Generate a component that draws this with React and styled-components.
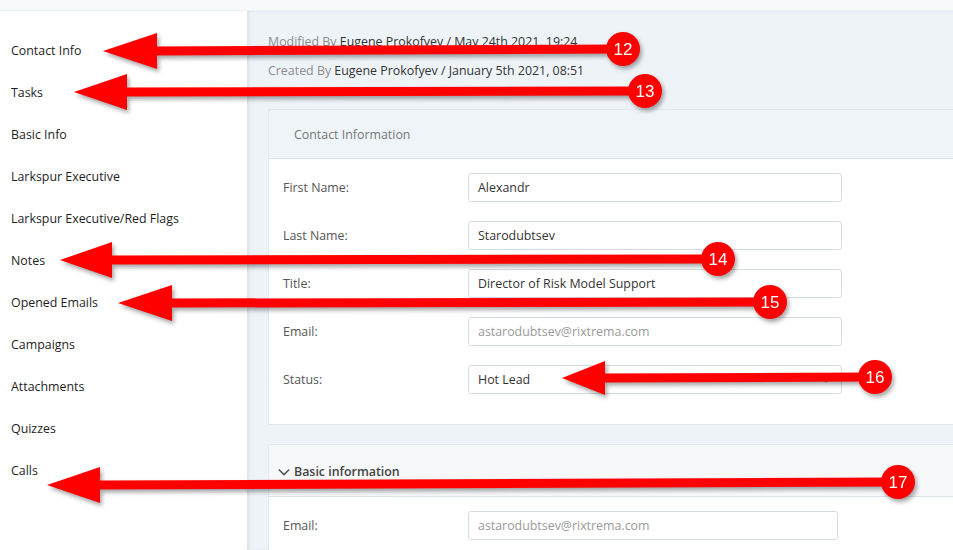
import React from 'react';
import styled, { createGlobalStyle } from 'styled-components';

const GlobalStyle = createGlobalStyle`
  html, body {
    margin: 0;
    padding: 0;
    background: #fff;
    font-family: "Open Sans", "Liberation Sans", sans-serif;
    font-size: 12.4px;
    overflow: hidden;
  }
  * { box-sizing: border-box; }
`;

const Page = styled.div`
  position: relative;
  width: 953px;
  height: 550px;
  display: flex;
  flex-direction: column;
  overflow: hidden;
`;

const TopBar = styled.div`
  height: 11px;
  flex-shrink: 0;
  background: #f8f9fb;
  border-bottom: 1px solid #eceff3;
`;

const Body = styled.div`
  flex: 1;
  display: flex;
  min-height: 0;
`;

const Sidebar = styled.nav`
  width: 247px;
  flex-shrink: 0;
  background: #fff;
  padding-top: 18px;
  display: flex;
  flex-direction: column;
`;

const NavItem = styled.div`
  height: 42px;
  display: flex;
  align-items: center;
  padding-left: 11px;
  color: #1e1e1e;
`;

const Main = styled.main`
  flex: 1;
  background: #eef3f8;
  box-shadow: inset 3px 0 4px -2px rgba(180, 195, 210, 0.5);
  padding: 16px 0 0 21px;
  display: flex;
  flex-direction: column;
  min-width: 0;
`;

const Meta = styled.div`
  display: flex;
  flex-direction: column;
  margin-bottom: 24px;
`;

const MetaLine = styled.div`
  line-height: 29px;
  color: #333;
  white-space: nowrap;
`;

const MetaMuted = styled.span`
  color: #8c8c8c;
`;

const Card = styled.section`
  background: #fff;
  border: 1px solid #e2e8ef;
  border-right: none;
  margin-bottom: 19px;
`;

const CardHeader = styled.div`
  height: ${p => p.$tall ? 52 : 49}px;
  display: flex;
  align-items: center;
  gap: 3px;
  padding-left: ${p => p.$collapsible ? 8 : 25}px;
  padding-top: ${p => p.$tall ? 2 : 0}px;
  background: ${p => p.$collapsible ? '#f6f8fa' : '#eff4f8'};
  border-bottom: 1px solid #dbe4ec;
  color: ${p => p.$collapsible ? '#444' : '#777'};
  font-weight: ${p => p.$collapsible ? 600 : 400};
`;

const CardBody = styled.div`
  display: flex;
  flex-direction: column;
  gap: 19px;
  padding: ${p => p.$pad || '14px 0 30px 14px'};
`;

const Row = styled.div`
  display: flex;
  align-items: center;
`;

const Label = styled.label`
  width: 185px;
  flex-shrink: 0;
  color: #555;
`;

const Field = styled.div`
  width: ${p => p.$width || 374}px;
  height: 29px;
  display: flex;
  align-items: center;
  justify-content: space-between;
  padding: 0 10px 0 9px;
  border: 1px solid #d6dbe1;
  border-radius: 3px;
  background: #fff;
  color: ${p => p.$disabled ? '#9a9a9a' : '#333'};
`;

const Overlay = styled.svg`
  position: absolute;
  left: 0;
  top: 0;
  pointer-events: none;
  filter: drop-shadow(2px 3px 2px rgba(0, 0, 0, 0.35));
`;

const Chevron = ({ size = 12, color = '#555', width = 1.4 }) => (
  <svg width={size} height={size} viewBox="0 0 12 12">
    <path d="M1.5 3.8 L6 8.2 L10.5 3.8" fill="none" stroke={color} strokeWidth={width} />
  </svg>
);

const navItems = [
  'Contact Info', 'Tasks', 'Basic Info', 'Larkspur Executive',
  'Larkspur Executive/Red Flags', 'Notes', 'Opened Emails', 'Campaigns',
  'Attachments', 'Quizzes', 'Calls',
];

const fields = [
  { label: 'First Name:', value: 'Alexandr' },
  { label: 'Last Name:', value: 'Starodubtsev' },
  { label: 'Title:', value: 'Director of Risk Model Support' },
  { label: 'Email:', value: 'astarodubtsev@rixtrema.com', disabled: true },
  { label: 'Status:', value: 'Hot Lead', select: true },
];

// tip x/y, head base x, half head height, badge x/y, number
const arrows = [
  { tx: 103, ty: 51, bx: 157, h: 18, cx: 623, cy: 49, n: 12 },
  { tx: 74, ty: 92, bx: 127, h: 18, cx: 645, cy: 91, n: 13 },
  { tx: 60, ty: 260, bx: 112, h: 18, cx: 718, cy: 259, n: 14 },
  { tx: 118, ty: 303, bx: 172, h: 18, cx: 770, cy: 302, n: 15 },
  { tx: 562, ty: 378, bx: 605, h: 17, cx: 875, cy: 377, n: 16 },
  { tx: 47, ty: 485, bx: 100, h: 18, cx: 898, cy: 482, n: 17 },
];

function Arrows() {
  return (
    <Overlay width="953" height="550">
      {arrows.map(a => (
        <g key={a.n}>
          <polygon points={`${a.tx},${a.ty} ${a.bx},${a.ty - a.h} ${a.bx},${a.ty + a.h}`} fill="#ff0000" />
          <polygon
            points={`${a.bx - 2},${a.ty - 4.5} ${a.cx},${a.cy - 4.5} ${a.cx},${a.cy + 4.5} ${a.bx - 2},${a.ty + 4.5}`}
            fill="#ff0000"
          />
          <circle cx={a.cx} cy={a.cy} r="17" fill="#ff0000" />
          <text
            x={a.cx}
            y={a.cy + 6}
            textAnchor="middle"
            fill="#fff"
            fontSize="17"
            fontFamily="'Liberation Sans', Arial, sans-serif"
          >
            {a.n}
          </text>
        </g>
      ))}
    </Overlay>
  );
}

export default function App() {
  return (
    <>
      <GlobalStyle />
      <Page>
        <TopBar />
        <Body>
          <Sidebar>
            {navItems.map(item => <NavItem key={item}>{item}</NavItem>)}
          </Sidebar>
          <Main>
            <Meta>
              <MetaLine><MetaMuted>Modified By</MetaMuted> Eugene Prokofyev / May 24th 2021, 19:24</MetaLine>
              <MetaLine><MetaMuted>Created By</MetaMuted> Eugene Prokofyev / January 5th 2021, 08:51</MetaLine>
            </Meta>
            <Card>
              <CardHeader>Contact Information</CardHeader>
              <CardBody>
                {fields.map(f => (
                  <Row key={f.label}>
                    <Label>{f.label}</Label>
                    <Field $disabled={f.disabled}>
                      <span>{f.value}</span>
                      {f.select && <Chevron size={10} color="#777" width={1.4} />}
                    </Field>
                  </Row>
                ))}
              </CardBody>
            </Card>
            <Card>
              <CardHeader $collapsible $tall>
                <Chevron size={14} color="#555" width={1.3} />
                Basic information
              </CardHeader>
              <CardBody $pad="14px 0 20px 14px">
                <Row>
                  <Label>Email:</Label>
                  <Field $disabled $width={370}>astarodubtsev@rixtrema.com</Field>
                </Row>
              </CardBody>
            </Card>
          </Main>
        </Body>
        <Arrows />
      </Page>
    </>
  );
}
